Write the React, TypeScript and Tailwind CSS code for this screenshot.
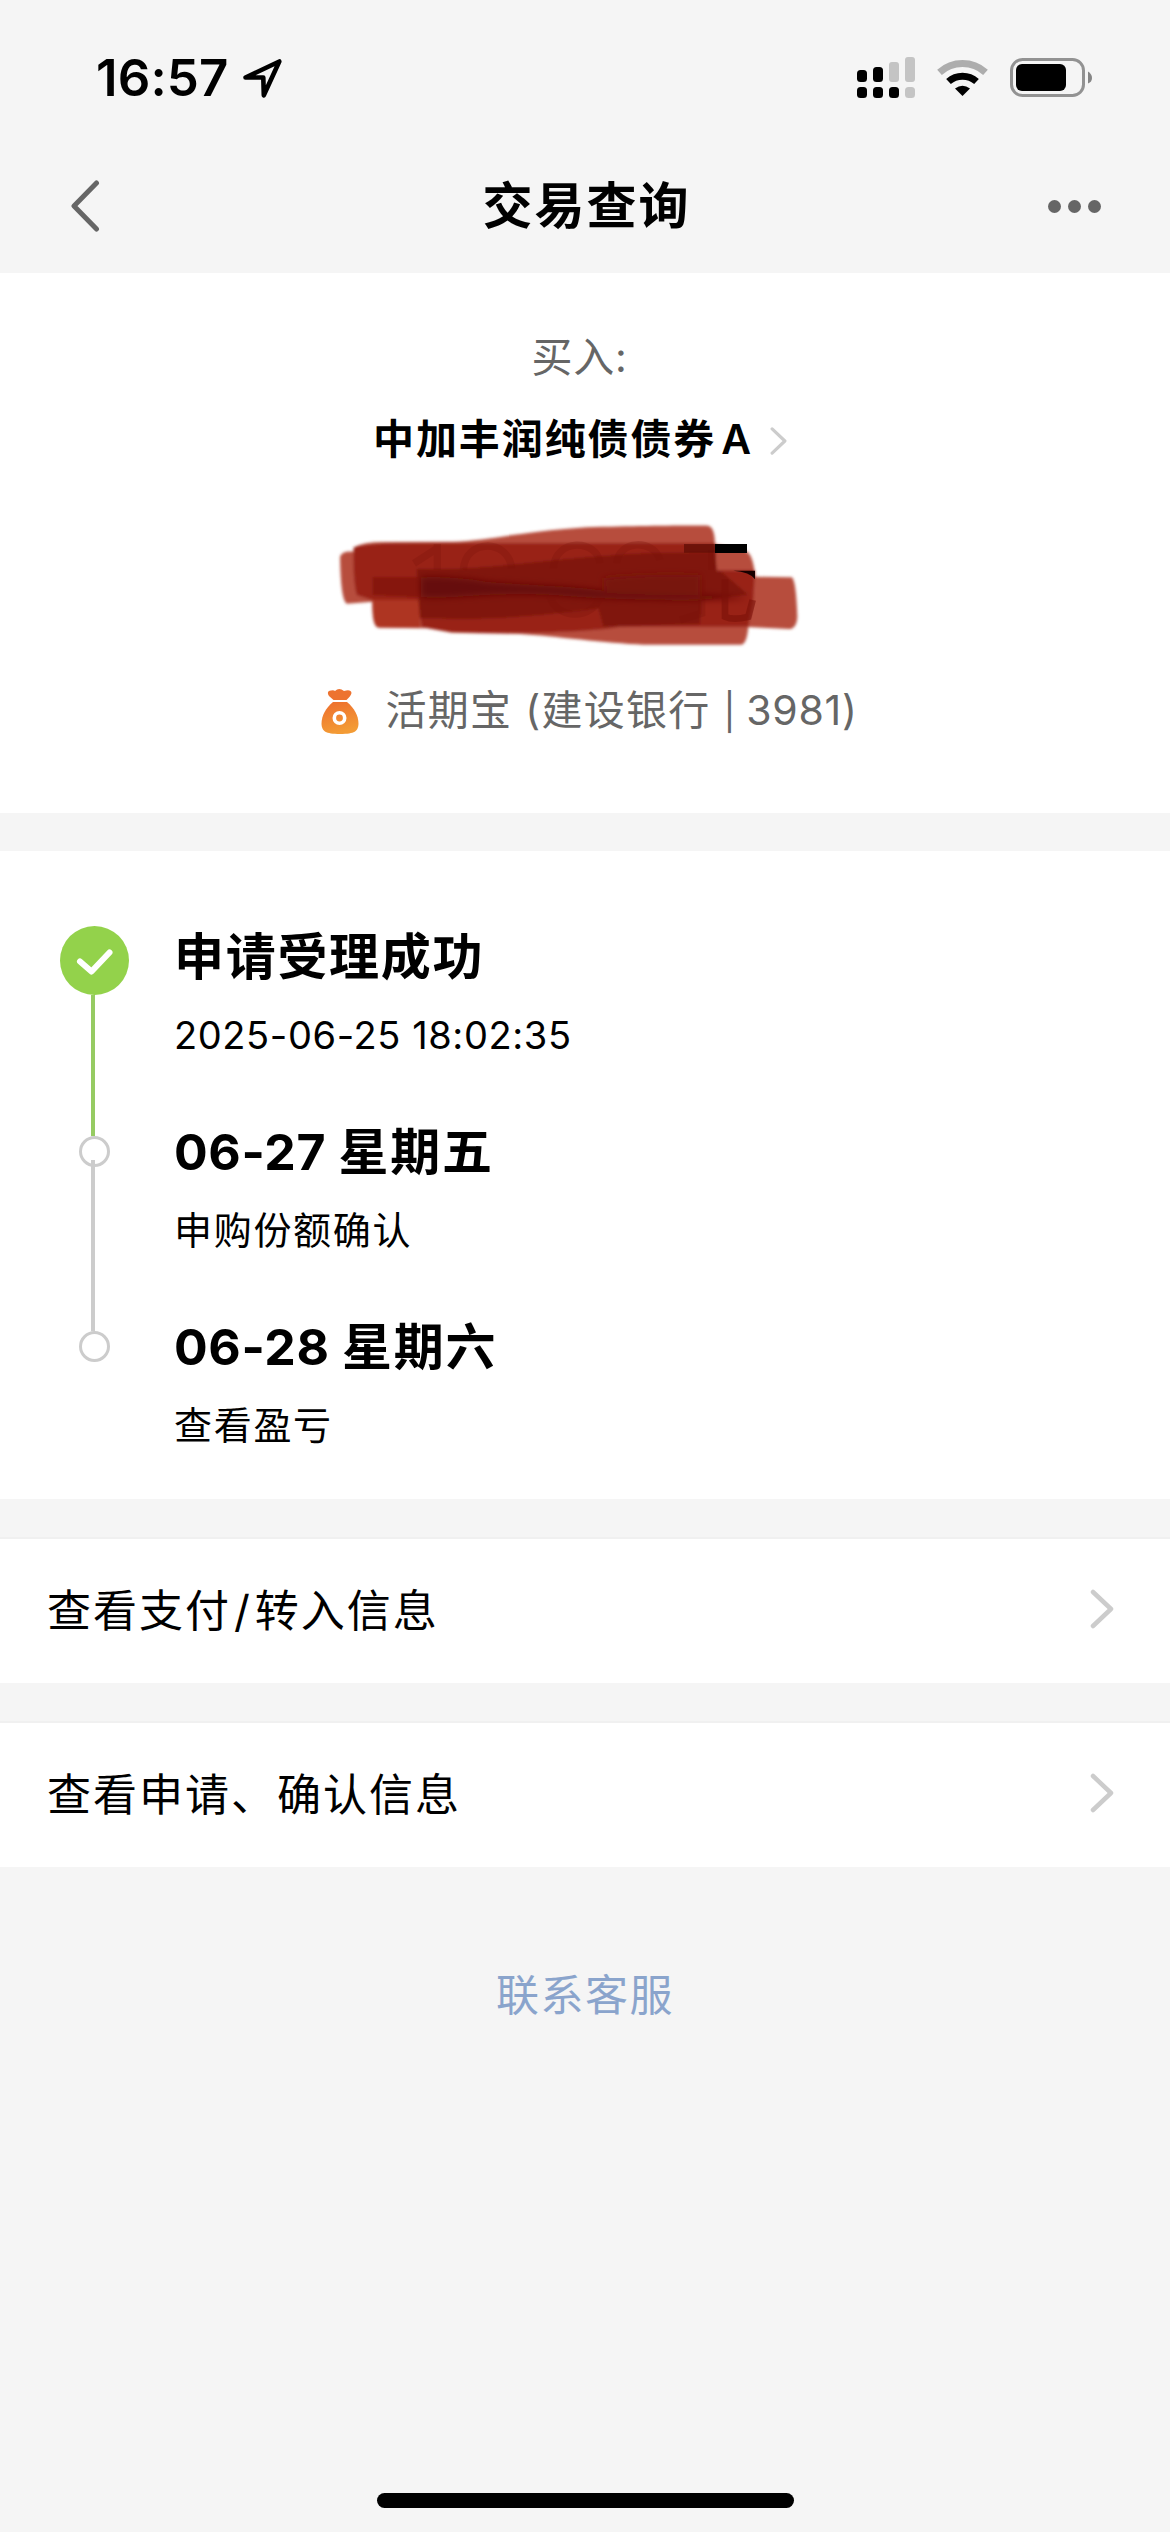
import type { ReactNode } from "react";

function StatusBar() {
  return (
    <div className="flex h-[152px] items-start justify-between pr-[78px] pl-[96px]">
      <div className="flex items-center pt-[48px]">
        <span className="text-[51px] leading-[60px] font-semibold tracking-[0.1px]">16:57</span>
        <svg className="ml-[15px] h-[39px] w-[39px]" viewBox="0 0 39 39" fill="none" stroke="#000" strokeWidth="4.600" strokeLinejoin="round">
          <path d="M2.500 18.500 36.300 2.500 20.800 36.300 20.300 18.500Z" />
        </svg>
      </div>
      <div className="flex items-center pt-[52px]">
        <svg className="h-[50px] w-[238px]" viewBox="0 0 238 50">
          <g fill="#000">
            <rect x="3" y="18" width="10" height="12" rx="3.5" />
            <rect x="19" y="15" width="10" height="15" rx="3.5" />
            <rect x="3" y="35" width="10" height="11" rx="3.5" />
            <rect x="19" y="35" width="10" height="11" rx="3.5" />
            <rect x="35" y="35" width="10" height="11" rx="3.5" />
          </g>
          <g fill="#c4c4c4">
            <rect x="35" y="10" width="10" height="20" rx="3" />
            <rect x="51" y="5" width="10" height="25" rx="3" />
            <rect x="51" y="35" width="10" height="11" rx="3.5" />
          </g>
          <path d="M85.500 20.400A34.500 34.500 0 0 1 131.500 20.400" fill="none" stroke="#adadad" strokeWidth="7" />
          <path d="M94.500 29.500A21 21 0 0 1 122.500 29.500" fill="none" stroke="#000" strokeWidth="7" />
          <path d="M101 36.500Q108.500 31 116 36.500L108.500 44Z" fill="#000" />
          <rect x="157.500" y="7.500" width="72" height="36" rx="11" fill="none" stroke="#929292" strokeWidth="3" />
          <rect x="162" y="12" width="50" height="27" rx="6" fill="#000" />
          <path d="M234 19.500Q238 22 238 26T234 31.500Z" fill="#858585" />
        </svg>
      </div>
    </div>
  );
}

function NavBar() {
  return (
    <div className="flex h-[121px] items-center justify-between pr-[69px] pl-[71px]">
      <svg className="-mt-[13px] h-[52px] w-[56px]" viewBox="0 0 56 52" fill="none" stroke="#666" strokeWidth="5" strokeLinecap="round" strokeLinejoin="round">
        <path d="M25.500 3 3 26 25.500 49" />
      </svg>
      <h1 className="-mt-[12px] mr-[2px] text-[50px] font-semibold tracking-[2px]">交易查询</h1>
      <div className="-mt-[12px] flex gap-[7px]">
        <i className="size-[13px] rounded-full bg-[#666]" />
        <i className="size-[13px] rounded-full bg-[#666]" />
        <i className="size-[13px] rounded-full bg-[#666]" />
      </div>
    </div>
  );
}

// marker scribble covering the amount
function HiddenAmount() {
  return (
    <svg className="h-[160px] w-[500px]" viewBox="0 0 1500 480">
      <defs>
        <filter id="soft" x="-5%" y="-5%" width="110%" height="110%">
          <feGaussianBlur stdDeviation="4" />
        </filter>
        <filter id="softer" x="-10%" y="-30%" width="120%" height="160%">
          <feGaussianBlur stdDeviation="10" />
        </filter>
      </defs>
      <g filter="url(#soft)">
        <path fill="#b74e3e" d="M60 170Q66 152 100 155L103 142Q130 125 200 126L400 125C500 123 600 95 800 82 950 78 1100 76 1165 77Q1184 82 1185 132L1270 150Q1300 155 1305 230L1415 232Q1428 238 1432 350 1430 388 1405 387L1285 381Q1280 435 1262 434L970 434C860 430 700 408 600 402L395 398 320 385 175 383Q155 380 157 305L80 311Q62 300 60 170Z" />
        <path fill="#ae3420" d="M157 285H300V384L175 382Q157 380 157 285Z" />
        <path fill="#992218" d="M101 142Q150 128 300 129H1185L1190 211H1305L1300 300 1285 380H900C800 398 600 402 395 396L305 380 295 300H157L110 285Q98 240 101 142Z" />
        <path fill="#86170f" d="M157 232 295 232V292L157 285Z" />
        <path fill="#80170f" d="M290 206C500 215 700 170 1000 158L1185 156 1190 212 1205 215 1285 284 1145 300 1140 372 850 380 835 325C650 350 500 362 300 355Z" />
      </g>
      <g filter="url(#softer)">
        <path fill="#660e08" d="M303 232Q400 228 500 245C650 258 760 258 850 272 1000 282 1200 282 1285 296 1150 300 900 305 700 285 500 275 400 298 303 292Z" />
        <path fill="#78140d" d="M850 235Q970 220 1140 225V290L855 280Z" />
      </g>
      <g fill="none" stroke="#791109" strokeWidth="22" opacity=".28">
        <path d="M352 132V210M355 143 282 190" />
        <path d="M430 210C435 115 565 115 575 205M700 205C705 115 830 115 840 190M890 190C895 120 1000 115 1020 180M690 290C710 360 820 360 840 290" />
        <path d="M1175 150V210M1145 240V340L1080 360" />
      </g>
      <path d="M1215 238V350Q1240 362 1285 350L1298 300" fill="none" stroke="#791109" strokeWidth="20" opacity=".6" />
      <path d="M1092 132H1190V158H1092Z" fill="#5b0c04" opacity=".7" />
      <path d="M1185 132H1281V159H1185Z" fill="#000" />
      <path d="M1240 212H1305V238Q1290 215 1240 212Z" fill="#180000" />
    </svg>
  );
}

function MoneyBag() {
  return (
    <svg className="h-[46px] w-[38px]" viewBox="0 0 38 46">
      <defs>
        <linearGradient id="bag" x1="0" y1="0" x2=".3" y2="1">
          <stop offset="0" stopColor="#ed6d2d" />
          <stop offset="1" stopColor="#f39b35" />
        </linearGradient>
      </defs>
      <path fill="#ed7330" d="M12.500 12 8 8Q5 3 10 2.500 13 2 14 3 18-1 23 3 30 1 30.500 5 30 8 25.500 12Z" />
      <path fill="url(#bag)" d="M12 14H26C33 20 37.500 27 37.500 36 37 43 34 46 19 46S1 43 .5 36C.5 27 5 20 12 14Z" />
      <circle cx="18.500" cy="30" r="5.200" fill="none" stroke="#fff" strokeWidth="3.600" />
    </svg>
  );
}

function Chevron({ className }: { className: string }) {
  return (
    <svg className={className} viewBox="0 0 24 40" fill="none" stroke="#ccc" strokeWidth="4.500" strokeLinecap="round" strokeLinejoin="round">
      <path d="M3 3 21 20 3 37" />
    </svg>
  );
}

function Step({ title, detail, children }: { title: ReactNode; detail: ReactNode; children: ReactNode }) {
  return (
    <li className="flex h-[195px]">
      <div className="flex w-[115px] flex-col items-center">{children}</div>
      <div className="pt-[1px]">
        <h2 className="text-[50px] leading-[60px] font-bold tracking-[1.7px]">{title}</h2>
        <p className="mt-[21px] text-[38px] leading-[54px] tracking-[1.7px]">{detail}</p>
      </div>
    </li>
  );
}

function LinkRow({ label }: { label: ReactNode }) {
  return (
    <div className="flex h-[146px] items-center justify-between border-t-2 border-[#f0f0f0] bg-white pr-[56px] pl-[47px]">
      <span className="text-[44px] leading-[60px] tracking-[2px]">{label}</span>
      <Chevron className="-mt-[4px] h-[40px] w-[24px]" />
    </div>
  );
}

export default function App() {
  return (
    <div className="flex h-[2532px] w-[1170px] flex-col bg-[#f5f5f5] font-[Inter,'Noto_Sans_CJK_SC',sans-serif] text-black">
      <StatusBar />
      <NavBar />

      <section className="flex h-[540px] flex-col items-center bg-white">
        <p className="mt-[54px] mr-[11px] text-[41px] leading-[60px] tracking-[0.7px] text-[#666]">买入:</p>
        <div className="mt-[22px] mr-[10px] flex items-center">
          <span className="text-[41px] leading-[60px] font-semibold tracking-[1.9px]">中加丰润纯债债券<span className="ml-[5px]">A</span></span>
          <Chevron className="mt-[4px] ml-[17px] h-[30px] w-[17px]" />
        </div>
        <div className="mt-[31px] mr-[30px] h-[160px]">
          <HiddenAmount />
        </div>
        <div className="mt-[20px] ml-[9px] flex items-center">
          <MoneyBag />
          <span className="ml-[26px] text-[41px] leading-[60px] tracking-[1.3px] text-[#666]">
            活期宝 (建设银行 <span className="text-[36px] tracking-[-2px]">|</span> <span className="tracking-[0.7px]">3981)</span>
          </span>
        </div>
      </section>

      <section className="mt-[38px] h-[648px] bg-white pt-[75px] pl-[59px]">
        <ol>
          <Step title="申请受理成功" detail={<span className="tracking-[0.6px]">2025-06-25 18:02:35</span>}>
            <div className="mr-[44px] flex h-[195px] flex-col items-center">
              <svg className="size-[69px] shrink-0" viewBox="0 0 69 69" fill="none">
                <circle cx="34.500" cy="34.500" r="34.500" fill="#93d24b" />
                <path d="M20 35.500 31.500 45.500 49.500 26.500" stroke="#fff" strokeWidth="6" strokeLinecap="round" strokeLinejoin="round" />
              </svg>
              <div className="mr-[3px] h-[141px] w-[4px] shrink-0 bg-[#96cb62]" />
            </div>
          </Step>
          <Step title={<><span className="tracking-[0.6px]">06-27 </span>星期五</>} detail="申购份额确认">
            <div className="mr-[44px] flex flex-col items-center pt-[15px]">
              <div className="size-[31px] shrink-0 rounded-full border-[3.5px] border-[#ccc]" />
              <div className="-mt-[7px] mr-[3px] h-[171px] w-[4px] shrink-0 bg-[#ccc]" />
            </div>
          </Step>
          <Step title={<><span className="tracking-[0.6px]">06-28 </span>星期六</>} detail="查看盈亏">
            <div className="mr-[44px] flex flex-col items-center pt-[15px]">
              <div className="size-[31px] shrink-0 rounded-full border-[3.5px] border-[#ccc]" />
            </div>
          </Step>
        </ol>
      </section>

      <section className="mt-[38px] flex flex-col gap-[38px]">
        <LinkRow label={<>查看支付<span className="mx-[3px]">/</span>转入信息</>} />
        <LinkRow label="查看申请、确认信息" />
      </section>

      <a className="mt-[96px] self-center text-[43px] leading-[64px] tracking-[1.5px] text-[#8aa4cc]">联系客服</a>

      <div className="mt-auto mb-[24px] h-[15px] w-[417px] self-center rounded-full bg-black" />
    </div>
  );
}
